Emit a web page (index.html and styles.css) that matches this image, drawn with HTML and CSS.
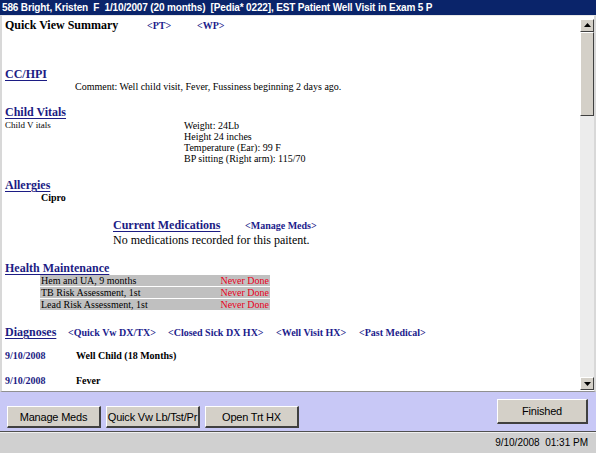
FILE: index.html
```html
<!DOCTYPE html>
<html>
<head>
<meta charset="utf-8">
<link rel="stylesheet" href="styles.css">
</head>
<body>
<div class="window">
  <div class="titlebar">586 Bright, Kristen&nbsp; F&nbsp; 1/10/2007 (20 months)&nbsp; [Pedia* 0222], EST Patient Well Visit in Exam 5 P</div>
  <div class="main">
    <div class="content">
      <div class="qvs"><span class="qvs-title">Quick View Summary</span><span class="link l-pt">&lt;PT&gt;</span><span class="link l-wp">&lt;WP&gt;</span></div>

      <div class="heading h-cc">CC/HPI</div>
      <div class="comment">Comment: Well child visit, Fever, Fussiness beginning 2 days ago.</div>

      <div class="heading h-vitals">Child Vitals</div>
      <div class="vitals">
        <div class="vitals-label">Child V itals</div>
        <div class="vitals-list">
          <div>Weight: 24Lb</div>
          <div>Height 24 inches</div>
          <div>Temperature (Ear): 99 F</div>
          <div>BP sitting (Right arm): 115/70</div>
        </div>
      </div>

      <div class="heading h-allergies">Allergies</div>
      <div class="cipro">Cipro</div>

      <div class="meds">
        <div class="meds-head"><span class="heading">Current Medications</span><span class="link l-mm">&lt;Manage Meds&gt;</span></div>
        <div class="nomeds">No medications recorded for this paitent.</div>
      </div>

      <div class="heading h-hm">Health Maintenance</div>
      <div class="hm-table">
        <div class="hm-row"><span>Hem and UA, 9 months</span><span class="never">Never Done</span></div>
        <div class="hm-row"><span>TB Risk Assessment, 1st</span><span class="never">Never Done</span></div>
        <div class="hm-row"><span>Lead Risk Assessment, 1st</span><span class="never">Never Done</span></div>
      </div>

      <div class="dx-head"><span class="heading">Diagnoses</span><span class="link l-q">&lt;Quick Vw DX/TX&gt;</span><span class="link l-c">&lt;Closed Sick DX HX&gt;</span><span class="link l-w">&lt;Well Visit HX&gt;</span><span class="link l-p">&lt;Past Medical&gt;</span></div>
      <div class="dx-row dx1"><span class="dx-date">9/10/2008</span><span class="dx-name">Well Child (18 Months)</span></div>
      <div class="dx-row dx2"><span class="dx-date">9/10/2008</span><span class="dx-name">Fever</span></div>
    </div>
    <div class="scrollbar">
      <div class="sb-btn"><svg width="7" height="4" viewBox="0 0 7 4"><path d="M3.5 0 L7 4 L0 4 Z" fill="#000"/></svg></div>
      <div class="sb-thumb"></div>
      <div class="sb-track"></div>
      <div class="sb-btn"><svg width="7" height="4" viewBox="0 0 7 4"><path d="M0 0 L7 0 L3.5 4 Z" fill="#000"/></svg></div>
    </div>
  </div>
  <div class="panel">
    <div class="btn-group">
      <button class="btn">Manage Meds</button>
      <button class="btn">Quick Vw Lb/Tst/Pr</button>
      <button class="btn">Open Trt HX</button>
    </div>
    <button class="btn btn-finished">Finished</button>
  </div>
  <div class="status">9/10/2008&nbsp; 01:31 PM</div>
</div>
</body>
</html>
```

FILE: styles.css
```css
* { box-sizing: border-box; }
html, body { margin: 0; padding: 0; }
body { width: 596px; height: 453px; overflow: hidden; background: #fff; font-family: "Liberation Serif", "Times New Roman", serif; }

.window { width: 596px; height: 453px; display: flex; flex-direction: column; }

.titlebar {
  height: 15px;
  background: #0a246a;
  color: #fff;
  font-family: "Liberation Sans", Arial, sans-serif;
  font-weight: bold;
  font-size: 10px;
  letter-spacing: -0.15px;
  line-height: 15px;
  padding-left: 2px;
  white-space: pre;
  overflow: hidden;
}

.main {
  height: 378px;
  display: flex;
  border-left: 2px solid #d8d8d8;
  border-right: 2px solid #d8d8d8;
  border-top: 1px solid #e8e8e8;
  border-bottom: 1px solid #909090;
}

.content {
  flex: 1;
  padding-left: 3px;
  color: #000;
  overflow: hidden;
}

.heading {
  font-weight: bold;
  font-size: 12px;
  line-height: 14px;
  height: 14px;
  color: #1c1c84;
  text-decoration: underline;
  text-underline-offset: 2px;
  text-decoration-thickness: 1px;
}

.link { font-weight: bold; font-size: 10px; color: #1c1c8c; }

.qvs { margin-top: 2px; height: 14px; line-height: 14px; display: flex; align-items: baseline; }
.qvs-title { font-weight: bold; font-size: 12px; width: 142px; }
.l-pt { width: 50px; }

.h-cc { margin-top: 35px; }
.comment { margin-left: 70px; font-size: 10px; line-height: 12px; height: 12px; }

.h-vitals { margin-top: 12px; }
.vitals { margin-top: 1px; display: flex; font-size: 10px; line-height: 11px; }
.vitals-label { width: 179px; font-size: 9px; }
.vitals-list { display: flex; flex-direction: column; }

.h-allergies { margin-top: 14px; }
.cipro { margin-left: 36px; font-weight: bold; font-size: 10px; line-height: 12px; height: 12px; }

.meds { margin-top: 14px; margin-left: 108px; }
.meds-head { display: flex; align-items: baseline; height: 14px; line-height: 14px; }
.meds-head .heading { width: 132px; }
.nomeds { margin-top: 1px; font-size: 12px; line-height: 14px; height: 14px; }

.h-hm { margin-top: 14px; }
.hm-table { margin-left: 35px; width: 230px; font-size: 10px; }
.hm-row {
  display: flex;
  justify-content: space-between;
  background: #c0c0c0;
  height: 12px;
  line-height: 12px;
  padding: 0 1px;
  border-bottom: 1px solid #fff;
}
.never { color: #e8001c; }

.dx-head { margin-top: 14px; display: flex; align-items: baseline; height: 14px; line-height: 14px; }
.dx-head .heading { width: 63px; }
.l-q { width: 100px; }
.l-c { width: 108px; }
.l-w { width: 83px; }

.dx-row { display: flex; font-size: 10px; line-height: 12px; height: 12px; font-weight: bold; }
.dx1 { margin-top: 11px; }
.dx2 { margin-top: 13px; }
.dx-date { width: 71px; color: #1c1c84; }

.scrollbar {
  width: 14px;
  margin-top: 3px;
  margin-bottom: 1px;
  display: flex;
  flex-direction: column;
}
.sb-btn {
  height: 13px;
  background: #d4d0c8;
  border-top: 1px solid #fff;
  border-left: 1px solid #fff;
  border-right: 1px solid #404040;
  border-bottom: 1px solid #404040;
  display: flex;
  align-items: center;
  justify-content: center;
}
.sb-thumb {
  height: 84px;
  background: #d4d0c8;
  border-top: 1px solid #fff;
  border-left: 1px solid #fff;
  border-right: 1px solid #404040;
  border-bottom: 1px solid #404040;
}
.sb-track { flex: 1; background: #ececec; }

.panel {
  height: 40px;
  background: #c8c8f6;
  display: flex;
  justify-content: space-between;
  padding: 0 8px 0 7px;
  border-bottom: 1px solid #505050;
}
.btn-group { display: flex; gap: 5px; align-items: flex-start; padding-top: 14px; }

.btn {
  font-family: "Liberation Sans", Arial, sans-serif;
  font-size: 11px;
  letter-spacing: -0.2px;
  white-space: nowrap;
  color: #000;
  background: #d4d0c8;
  width: 94px;
  height: 22px;
  padding: 0;
  border-top: 1px solid #fff;
  border-left: 1px solid #fff;
  border-right: 2px solid #404040;
  border-bottom: 2px solid #404040;
}
.btn-finished { width: 91px; height: 25px; margin-top: 7px; }

.status {
  flex: 1;
  background: #d0d0d0;
  font-family: "Liberation Sans", Arial, sans-serif;
  font-size: 10px;
  line-height: 20px;
  text-align: right;
  padding-right: 8px;
  color: #000;
  border-top: 1px solid #f0f0f0;
}
```
